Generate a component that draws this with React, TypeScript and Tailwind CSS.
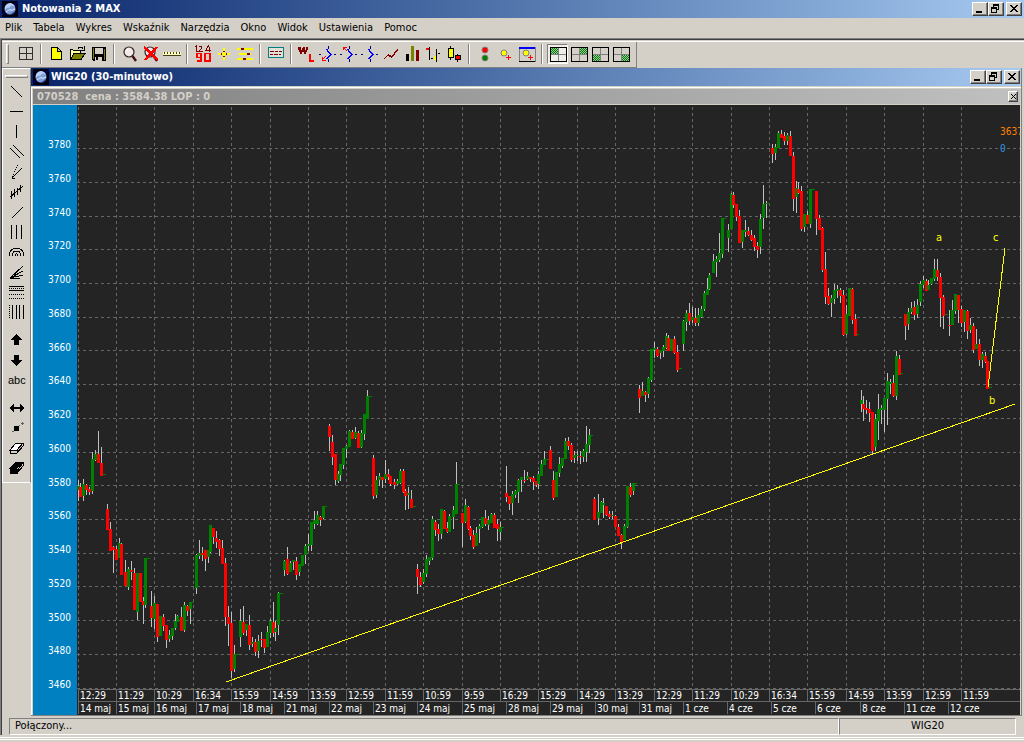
import React from 'react';

type Origin = { x: number; y: number };
type Block = { origin: Origin; candles: string };

/* Each candle: centre, high, body top, body bottom, low, colour.
   Values are in thirds of a pixel from the origin of their block. */
const blocks: Block[] = [
  {
    origin: { x: -1, y: 274 },
    candles: `7 300 318 330 363 g;13 309 321 351 351 r;22 297 312 348 363 g;31 312 315 330 345 r;40 321 327 336 345 r;49 216 237 333 342 g;58 210 222 240 243 g;67 153 222 249 249 r;76 201 249 288 288 r;85 282 282 285 285 g;
94 372 387 450 450 r;103 426 447 513 513 r;112 498 501 510 579 r;121 498 507 540 540 r;130 474 489 534 534 g;136 489 492 585 585 r;148 540 576 618 618 r;157 561 567 621 630 g;166 543 570 576 600 r;175 564 579 690 690 r;184 579 579 696 720 g;193 579 579 666 666 r;202 651 663 675 732 r;208 534 534 675 684 g;217 534 534 537 537 g;
226 633 678 714 741 r;235 648 669 717 747 g;244 672 672 771 786 r;253 708 708 768 768 g;262 702 711 738 753 r;271 735 735 780 804 r;280 750 765 777 786 g;289 744 744 768 780 g;298 702 723 744 750 g;304 705 708 726 726 g;316 681 711 753 753 r;325 666 675 750 756 g;334 675 678 693 708 r;343 666 666 687 732 g;349 666 666 669 669 g;
361 522 525 624 642 g;370 480 519 528 537 g;379 501 519 525 543 r;388 510 510 537 573 r;397 510 510 531 549 g;403 435 435 516 519 g;412 444 444 471 492 r;421 453 474 486 504 r;430 477 480 507 528 r;439 480 504 552 552 r;448 534 549 711 738 r;457 678 711 732 798 r;466 696 729 873 894 r;475 795 822 867 876 g;484 822 822 825 825 g;
493 687 723 771 801 g;502 678 726 759 765 r;511 732 732 750 768 g;520 705 735 795 810 r;529 771 786 792 801 g;538 777 786 816 828 r;547 765 783 813 834 g;556 756 777 780 801 r;565 777 777 804 819 r;574 738 756 801 801 g;583 717 723 759 774 g;592 666 726 759 771 r;598 723 744 756 783 g`,
  },
  {
    origin: { x: 193, y: 274 },
    candles: `25 636 639 735 765 g;34 639 639 642 642 g;43 540 543 570 588 g;52 501 537 582 585 r;61 543 549 576 576 g;70 540 540 546 570 g;79 531 543 585 600 r;88 552 552 576 588 g;97 525 525 558 558 g;106 492 498 525 552 g;115 462 492 498 513 g;124 426 426 495 513 g;133 393 420 432 447 g;142 393 405 432 435 g;151 408 411 420 438 r;160 378 378 414 417 g;166 378 378 381 381 g;
178 132 138 171 213 r;187 165 186 231 255 r;196 222 222 300 315 r;205 273 282 303 309 g;211 252 252 285 303 g;220 204 204 255 267 g;229 195 198 207 234 g;238 150 153 201 201 g;247 150 156 177 177 r;256 141 156 174 177 g;265 153 159 204 204 r;274 150 159 201 204 g;283 102 102 162 180 g;292 30 48 117 117 g;301 48 48 51 51 g;
310 225 234 348 357 r;319 288 300 345 354 g;328 279 288 300 318 g;337 291 291 300 324 r;346 240 282 297 309 g;355 267 282 291 300 r;361 288 288 312 318 r;373 297 306 315 327 r;382 297 303 312 315 g;391 267 273 309 312 g;400 267 273 336 339 r;406 327 333 348 390 r;415 321 339 345 387 g;424 330 357 384 384 r;433 378 378 381 381 g;
442 552 567 591 642 r;451 576 591 615 621 r;460 567 579 606 612 g;469 525 537 582 591 g;478 531 531 543 555 g;487 408 417 534 540 g;496 420 426 450 468 r;505 432 447 462 483 r;514 387 387 462 477 g;523 390 393 447 447 r`,
  },
  {
    origin: { x: 363, y: 294 },
    candles: `22 366 384 396 399 r;28 342 348 396 396 g;40 318 330 351 387 g;49 186 252 342 342 g;55 252 252 255 255 g;67 339 339 369 441 r;76 297 315 366 369 g;85 318 321 387 390 r;91 378 384 408 420 r;100 390 405 441 447 r;109 381 399 438 438 g;118 372 378 387 429 g;127 351 351 381 384 g;136 330 354 372 378 r;145 348 360 375 390 g;154 339 342 369 369 g;163 339 345 384 384 r;172 357 372 387 423 r;181 366 381 396 420 g;187 381 381 384 384 g;
199 198 279 291 306 r;208 288 288 312 330 r;217 273 282 309 345 g;226 270 273 285 294 g;235 237 240 276 309 g;244 231 231 240 276 g;253 210 240 243 249 r;262 216 228 237 240 g;271 231 231 237 246 r;280 228 234 246 270 r;289 243 243 255 261 r;295 213 222 252 267 g;304 180 192 228 228 g;313 153 177 195 195 g;322 177 177 180 180 g;331 138 150 207 207 r;340 213 240 294 300 r;349 216 216 291 291 g;358 171 192 219 231 g;367 174 174 198 204 g;376 114 123 177 177 g;385 111 123 138 150 r;394 129 135 180 186 r;403 153 165 174 189 g;412 153 165 168 183 g;421 153 168 171 192 r;430 147 153 171 186 g;439 78 132 156 186 g;448 87 105 135 159 g;454 105 105 108 108 g;
463 291 297 360 360 r;475 282 336 354 375 g;484 303 306 339 339 g;490 294 309 315 354 g;499 318 318 345 348 r;508 333 342 351 357 r;517 333 345 348 357 g;526 345 348 381 381 r;535 372 381 408 408 r;544 402 405 426 447 r;553 372 378 420 420 g;562 258 258 381 384 g;571 249 261 285 291 r;580 249 249 273 285 g;586 249 249 252 252 g`,
  },
  {
    origin: { x: 553, y: 14 },
    candles: `28 795 807 834 879 r;37 786 813 828 828 g;46 813 816 825 846 r;55 771 774 822 834 g;64 687 687 780 786 g;73 666 684 690 714 g;82 681 687 708 711 r;91 690 690 699 717 g;100 675 681 693 711 g;109 639 648 684 687 g;115 645 654 693 693 r;124 657 657 693 693 g;133 648 657 699 702 r;142 675 696 750 756 r;151 744 744 747 747 g;
160 600 603 672 693 g;169 570 579 606 633 g;178 549 579 603 615 r;187 561 591 600 609 g;196 564 594 609 618 r;205 564 585 609 618 g;214 558 567 591 594 g;223 513 519 567 573 g;232 474 507 525 525 g;238 459 465 507 510 g;250 402 423 459 459 g;259 408 417 426 471 g;268 339 399 420 426 g;277 294 294 402 414 g;283 294 294 297 297 g;
295 312 330 354 396 g;304 219 222 327 327 g;310 216 225 255 264 r;319 252 252 291 303 r;328 270 288 369 369 r;337 330 330 366 384 g;346 300 330 336 351 g;355 321 333 345 348 r;364 330 345 360 363 r;373 345 354 381 393 r;382 366 378 390 414 r;391 282 297 381 402 g;400 195 252 294 327 g;409 243 249 252 294 g;415 249 249 252 252 g;
427 72 84 102 129 r;436 72 81 99 120 g;445 33 39 84 84 g;454 30 42 54 54 r;463 36 48 63 75 r;472 39 45 63 75 g;481 33 48 108 108 r;490 96 108 237 273 r;499 183 204 231 279 g;505 186 207 219 222 r;514 198 213 327 333 r;523 282 282 321 336 g;532 273 285 312 312 r;541 207 207 312 324 g;550 207 207 210 210 g;559 213 213 297 345 r;568 285 294 330 330 r;577 321 324 450 456 r;586 396 447 531 552 r;595 504 528 552 555 r`,
  },
  {
    origin: { x: 733, y: 74 },
    candles: `64 345 354 369 411 g;73 312 330 357 372 g;82 315 327 333 354 g;91 324 330 348 369 r;100 330 345 465 468 r;109 375 402 462 465 g;118 324 324 408 408 g;127 324 327 420 432 r;136 402 417 468 468 r;142 462 462 465 465 g;
154 630 660 672 696 g;160 648 672 687 723 r;169 660 684 690 702 r;178 666 687 699 726 r;187 696 696 813 822 r;196 702 717 801 813 g;205 642 687 723 780 g;214 675 684 690 732 g;223 654 654 690 756 g;232 579 603 657 735 g;241 597 606 612 642 g;250 585 609 648 651 r;259 513 528 648 660 g;268 525 537 585 585 r;274 579 579 582 582 g;
286 402 402 438 480 r;295 384 396 432 450 g;304 366 384 396 402 g;313 363 381 405 420 r;322 357 375 402 414 g;331 303 312 366 378 g;340 288 300 315 324 g;349 297 303 333 333 r;355 300 315 330 330 g;364 294 294 312 315 g;373 237 267 297 303 g;382 237 270 291 303 r;391 279 291 354 441 r;400 345 351 408 447 r;409 402 402 405 405 g;418 390 435 438 468 r;427 360 390 435 435 g;436 342 342 393 402 g;445 345 345 390 429 r;454 378 387 429 441 r;463 390 390 426 456 g;472 390 393 453 477 r;481 414 435 450 459 g;490 429 438 510 519 r;499 447 492 507 507 g;508 477 492 540 558 r;517 516 522 540 564 g;526 516 528 546 549 r;532 543 543 627 627 r;541 621 621 624 624 g`,
  },
];

const hours: [number, string][] = [
  [1, '12:29'], [39, '11:29'], [77, '10:29'], [116, '16:34'], [154, '15:59'], [193, '14:59'],
  [231, '13:59'], [269, '12:59'], [308, '11:59'], [346, '10:59'], [385, '9:59'], [423, '16:29'],
  [461, '15:29'], [500, '14:29'], [538, '13:29'], [577, '12:29'], [615, '11:29'], [654, '10:29'],
  [692, '16:34'], [730, '15:59'], [769, '14:59'], [807, '13:59'], [846, '12:59'], [884, '11:59'],
];

const days: [number, string][] = [
  [1, '14 maj'], [39, '15 maj'], [77, '16 maj'], [119, '17 maj'], [163, '18 maj'], [207, '21 maj'],
  [252, '22 maj'], [296, '23 maj'], [340, '24 maj'], [385, '25 maj'], [429, '28 maj'], [473, '29 maj'],
  [518, '30 maj'], [562, '31 maj'], [606, '1 cze'], [650, '4 cze'], [694, '5 cze'], [738, '6 cze'],
  [783, '8 cze'], [827, '11 cze'], [871, '12 cze'],
];

const levels = [42, 76, 110, 143, 177, 211, 244, 278, 312, 346, 379, 413, 447, 480, 514, 548, 582];
const prices = levels.map((_, i) => 3780 - i * 20);

const candles = blocks.flatMap(({ origin, candles: list }) =>
  list.split(';').map((entry) => {
    const [x, h, t, b, l, c] = entry.trim().split(' ');
    const py = (v: string) => origin.y + Math.round(Number(v) / 3);
    return {
      x: origin.x + Math.floor(Number(x) / 3),
      high: py(h),
      top: py(t),
      bottom: py(b),
      low: py(l),
      fill: c === 'g' ? '#008000' : '#ff0000',
    };
  }),
);

function Chart() {
  return (
    <svg className="block h-[610px] w-full" shapeRendering="crispEdges" role="img" aria-label="WIG20">
      <g transform="translate(0 1)">
        <g stroke="#666666" strokeDasharray="3 3">
          {levels.map((y) => (
            <line key={y} x1="0" x2="100%" y1={y + 0.5} y2={y + 0.5} />
          ))}
          {hours.map(([x]) => (
            <line key={x} x1={x + 0.5} x2={x + 0.5} y1="1" y2="583" />
          ))}
        </g>
        <g stroke="#666666">
          <line x1="1" x2="100%" y1="583.5" y2="583.5" />
          <line x1="1" x2="100%" y1="595.5" y2="595.5" />
          {hours.map(([x]) => (
            <line key={x} x1={x + 0.5} x2={x + 0.5} y1="583" y2="595" />
          ))}
          {days.map(([x]) => (
            <line key={x} x1={x + 0.5} x2={x + 0.5} y1="596" y2="608" />
          ))}
        </g>
        {candles.map((c) => (
          <g key={c.x}>
            <rect x={c.x} y={c.high} width="1" height={c.low - c.high} fill="#c0c0c0" />
            <rect x={c.x - 1} y={c.top} width="3" height={c.bottom - c.top} fill={c.fill} />
          </g>
        ))}
        <g stroke="#ffff00">
          <line x1="149" y1="576" x2="938" y2="298" />
          <line x1="911" y1="281" x2="928" y2="142" />
        </g>
        <g fontSize="10" fill="#ffffff">
          {hours.map(([x, label]) => (
            <text key={x} x={x + 2} y="593">{label}</text>
          ))}
          {days.map(([x, label]) => (
            <text key={x} x={x + 2} y="606">{label}</text>
          ))}
          <text x="923" y="29" fill="#ff8000">3637</text>
          <text x="923" y="46" fill="#2a98e8">0</text>
        </g>
        <g fontSize="11" fill="#ffff00">
          <text x="859" y="135">a</text>
          <text x="916" y="135">c</text>
          <text x="912" y="298">b</text>
        </g>
      </g>
    </svg>
  );
}

function Logo() {
  return (
    <svg viewBox="0 0 16 16" className="h-4 w-4 shrink-0" aria-hidden="true">
      <rect width="16" height="16" fill="#000010" />
      <path d="M0 14 16 1" stroke="#0000c0" />
      <circle cx="8" cy="8" r="5.5" fill="#7f9fd8" />
      <path d="M3 9c2-4 4-1 5-3s3-2 5 0c-1-3-3-4-5-4C5 2 2 5 3 9z" fill="#b8d0f8" />
      <path d="M4 11c2-1 3-3 5-2s2-1 4-1" stroke="#e8f0ff" fill="none" />
      <path d="M8 13.4a5.5 5.5 0 0 0 5.4-4C12 11 10 11.5 8 13.4z" fill="#3048a0" />
    </svg>
  );
}

const raised =
  'flex items-center justify-center bg-[#d4d0c8] border border-white border-r-[#404040] border-b-[#404040] shadow-[inset_-1px_-1px_0_#808080]';

function WindowButtons() {
  return (
    <div className="flex">
      <button aria-label="Minimalizuj" className={`${raised} h-[14px] w-4`}>
        <svg className="h-3 w-[14px]" viewBox="0 0 14 12"><path d="M3 8h6v2H3z" /></svg>
      </button>
      <button aria-label="Przywróć" className={`${raised} h-[14px] w-4`}>
        <svg className="h-3 w-[14px]" viewBox="0 0 14 12" shapeRendering="crispEdges">
          <path d="M4 1h6v6H8V6h1V3H5v1H4zM2 4h6v6H2zM3 6v3h4V6z" fillRule="evenodd" />
        </svg>
      </button>
      <button aria-label="Zamknij" className={`${raised} ml-0.5 h-[14px] w-4`}>
        <svg className="h-3 w-[14px]" viewBox="0 0 14 12" shapeRendering="crispEdges">
          <path d="M3 2h2v1h1v1h2V3h1V2h2v1h-1v1H9v1H8v1h1v1h1v1h1v1H9V8H8V7H6v1H5v1H3V8h1V7h1V6h1V5H5V4H4V3H3z" />
        </svg>
      </button>
    </div>
  );
}

type Icon = { name: string; art: React.ReactNode; pressed?: boolean };

const arrow = (tip: React.ReactNode) => (
  <>
    <path d="M10.500 2v3M10.500 15v3M1 10.500h2M16 10.500h2" stroke="#000080" />
    <path d="M8 5h2v2h1v1h1v1h1v1h1v1h-1v1h-1v1h-1v1h-1v1H8v-1h1v-1h1v-1h1v-1h1v-1h-1V9h-1V8H9V6H8z" fill="#0000ff" />
    {tip}
  </>
);

const quad = (x: number, y: number) => (
  <>
    <path d="M10.500 3v14M3 10.500h15" stroke="#808080" />
    <rect x={x} y={y} width="7" height="6" fill="url(#green-checks)" />
    <rect x="2.500" y="3.500" width="16" height="14" fill="none" stroke="#000" />
  </>
);

const lens = (
  <g shapeRendering="geometricPrecision">
    <circle cx="9" cy="8" r="5" fill="#f4e8e8" stroke="#302020" strokeWidth="1.2" />
    <path d="M6 8a3 3 0 0 1 3-3" stroke="#fff" fill="none" />
    <path d="m12.500 12 3.500 5" stroke="#401010" strokeWidth="2.400" />
  </g>
);

const groups: Icon[][] = [
  [{
    name: 'Okna',
    art: <><rect x="3.500" y="3.500" width="13" height="12" fill="none" stroke="#303030" /><path d="M10.500 3.500v12M3.500 9.500h13" stroke="#303030" /></>,
  }],
  [
    { name: 'Nowy', art: <path d="M4.500 3.500h6l4 4v8h-10zM10.500 3.500v4h4" fill="#ffff00" stroke="#000" /> },
    {
      name: 'Otwórz',
      art: <><path d="M2.500 15.500v-10h2l1 1h7v3" fill="#ffffa0" stroke="#000" /><path d="M2.500 15.500 6 9.500h11l-4 6z" fill="#808000" stroke="#000" /><path d="M10 4.500q3-3 5 0M16 2v4h-3" fill="none" stroke="#000" /></>,
    },
    {
      name: 'Zapisz',
      art: <><path d="M3 3h14v14H4l-1-1z" /><path d="M6 4h8v6H6z" fill="#d4d0c8" /><path d="M6 13h7v4H6z" fill="#d4d0c8" /><path d="M7 13h2v3H7z" /><path d="M4 4h1v11H4zM15 5h1v11h-1z" fill="#808000" /></>,
    },
  ],
  [
    { name: 'Lupa', art: lens },
    { name: 'Wyłącz lupę', art: <>{lens}<path d="m3 3 14 13M16 3 4 16" stroke="#ff0000" strokeWidth="2.600" /></> },
    {
      name: 'Linijka',
      art: <><rect x="1" y="8" width="18" height="3" fill="#ffffb0" /><path d="M2 8.500h17M2 9.500h17" stroke="#404040" strokeDasharray="1 2" /><path d="M1 11.500h18" stroke="#404020" /></>,
    },
  ],
  [
    {
      name: 'Wartości',
      art: <><path d="m2 3 1-1v6M6 3q3-2 3 0 0 2-3 4h4M16 1l-3 5h5M16 3v5" fill="none" stroke="#800000" /><path d="M4 9.500h4v4H4zM8 13v4H4M12 9.500h5V17h-5z" fill="none" stroke="#ff0000" strokeWidth="1.400" /></>,
    },
    {
      name: 'Krzyż',
      art: <><path d="M9 4h2v12H9zM4 9h12v2H4z" fill="#ffff00" /><path d="M9 7h2v1H9zM9 12h2v1H9zM7 9h1v2H7zM12 9h1v2h-1z" fill="#800000" /></>,
    },
    {
      name: 'Parametry',
      art: <><path d="M2 4h16v2H2zM4 9h12v2H4zM2 14h16v2H2z" fill="#ffff00" /><path d="M6 4h3v2H6zM12 9h3v2h-3zM8 14h3v2H8z" fill="#800000" /></>,
    },
  ],
  [{
    name: 'Tabela notowań',
    art: <><rect x="2.500" y="3.500" width="15" height="10" fill="#e4e0d8" stroke="#008080" /><path d="M4 7.500h4M9 7.500h3M13 7.500h3M4 10.500h3M8 10.500h4M13 10.500h2" stroke="#800000" /></>,
  }],
  [
    {
      name: 'WL',
      art: <><path d="M2 3v2l2 4 2-4 2 4 2-4V3M3 3l1 5M7 3l1 5" fill="none" stroke="#800000" strokeWidth="1.500" /><path d="M13 10v7h4" fill="none" stroke="#ff0000" strokeWidth="2" /></>,
    },
    { name: 'Poprzedni', art: arrow(<path d="m8 12-4 4M4.500 13v3.500H8" stroke="#ff0000" fill="none" />) },
    { name: 'Następny', art: arrow(<path d="m8 7-4-4M4.500 6V3.500H8" stroke="#ff0000" fill="none" />) },
    { name: 'Bieżący', art: arrow(null) },
    { name: 'Liniowy', art: <path d="m3 15 4-4 4 2 6-8" fill="none" stroke="#800000" strokeWidth="1.400" /> },
    {
      name: 'Słupkowy',
      art: <><path d="M4 10h3v7H4z" /><path d="M9 2h3v15H9z" fill="#808000" /><path d="M14 6h3v11h-3z" fill="#800000" /></>,
    },
    {
      name: 'OHLC',
      art: <><path d="M6.500 3v13M8 14.500h2M13.500 5v13M15 9.500h2" stroke="#000" /><path d="M3 4h3v2H3z" fill="#ff0000" /><path d="M11 12h2v4h-2z" fill="#ffff00" /></>,
    },
    {
      name: 'Świecowy',
      art: <><path d="M6.500 2v14M13.500 10v8" stroke="#000" /><rect x="4.500" y="4.500" width="5" height="9" fill="#ffff00" stroke="#000" /><rect x="11.500" y="11.500" width="5" height="4" fill="#ff0000" stroke="#000" /></>,
    },
  ],
  [
    { name: 'Sygnały', art: <g stroke="#808080" shapeRendering="geometricPrecision"><circle cx="10" cy="6" r="3" fill="#ff0000" /><circle cx="10" cy="14" r="3" fill="#008000" /></g> },
    { name: 'Dodaj', art: <><circle cx="8" cy="9" r="3" fill="#ffff00" stroke="#808080" shapeRendering="geometricPrecision" /><path d="M12.500 11v5M10 13.500h5" stroke="#ff0000" /></> },
    {
      name: 'Dodaj okno',
      art: <><rect x="2.500" y="3.500" width="16" height="14" fill="none" stroke="#808080" /><path d="M2 4h16" stroke="#0000ff" strokeWidth="2" /><path d="M2 17.500h16" stroke="#000" /><circle cx="9" cy="9" r="3" fill="#ffff00" stroke="#808080" shapeRendering="geometricPrecision" /><path d="M13.500 11v5M11 13.500h5" stroke="#ff0000" /></>,
    },
  ],
  [
    { name: 'Układ 1', art: quad(3, 4), pressed: true },
    { name: 'Układ 2', art: quad(11, 4) },
    { name: 'Układ 3', art: quad(3, 11) },
    { name: 'Układ 4', art: quad(11, 11) },
  ],
];

const drawingTools: Icon[][] = [
  [
    { name: 'Linia', art: <path d="m4.500 4.500 11 11" /> },
    { name: 'Pozioma', art: <path d="M3 9.500h13" /> },
    { name: 'Pionowa', art: <path d="M9.500 3v13" /> },
    { name: 'Kanał', art: <path d="m3 6 10 10M6 3l11 11" /> },
    { name: 'Wachlarz', art: <><path d="M5 16 15 6M5 16h3" /><path d="M5 15 11 3" strokeDasharray="1 1" /></> },
    { name: 'Regresja', art: <path d="m3 15 13-11M4.500 9v8M7.500 7v8M10.500 6v7M13.500 3v7" /> },
    { name: 'Promień', art: <path d="M5 16 16 5" /> },
    { name: 'Linie pionowe', art: <path d="M4.500 3v14M9.500 3v14M14.500 3v14" /> },
    {
      name: 'Łuki',
      art: <path d="M2.500 14v-2c0-3 3-6 7-6s7 3 7 6v2M5.500 14v-1c0-3 2-4 4-4s4 1 4 4v1M8 14c0-3 3-3 3 0" fill="none" />,
    },
    { name: 'Fan', art: <path d="M3 16 16 4M3 16 16 9M3 16l13-3M3 16h10" /> },
    { name: 'Fibonacci', art: <><path d="M2 4.500h15M2 8.500h15" /><path d="M2 6.500h15M2 12.500h15M2 16.500h15" strokeDasharray="1 1" /></> },
    { name: 'Strefy czasowe', art: <><path d="M5.500 3v14M9.500 3v14M12.500 3v14M16.500 3v14" /><path d="M2.500 3v14" strokeDasharray="1 1" /></> },
  ],
  [
    { name: 'W górę', art: <path d="M9.500 4 16 10h-4v5H7v-5H3z" fill="#000" stroke="none" /> },
    { name: 'W dół', art: <path d="M9.500 16 16 10h-4V5H7v5H3z" fill="#000" stroke="none" /> },
    { name: 'Tekst', art: <text x="1" y="14" fontSize="11" fill="#000" stroke="none" fontFamily="Liberation Sans, sans-serif">abc</text> },
  ],
  [
    { name: 'Rozciągnij', art: <path d="m2 10 5-4v3h6V6l5 4-5 4v-3H7v3z" fill="#000" stroke="none" /> },
    { name: 'Punkt', art: <><path d="M7 8h5v5H7z" fill="#000" stroke="none" /><path d="M14 5.500h3M15.500 4v3M5 13.500h2M12 7.500h1" stroke="#606060" /></> },
    { name: 'Gumka', art: <><path d="m3 12 6-7h7l-6 7z" fill="#fff" /><path d="M3 12v3h7l6-7V5M10 12v3" fill="none" /></> },
    { name: 'Usuń wszystko', art: <><path d="m3 10 6-6h7l-6 6z" /><path d="M3 11h7v4H3z" /><path d="m11 11 5-6v3l-5 6z" fill="#d4d0c8" /></> },
  ],
];

function ToolButton({ icon }: { icon: Icon }) {
  return (
    <button
      aria-label={icon.name}
      className={
        icon.pressed
          ? 'flex h-5 w-[21px] items-center justify-center border border-t-[#808080] border-l-[#808080] border-r-white border-b-white bg-[#f0eeea]'
          : 'flex h-5 w-[21px] items-center justify-center'
      }
    >
      <svg viewBox="0 0 20 20" className="h-5 w-5 shrink-0" shapeRendering="crispEdges">{icon.art}</svg>
    </button>
  );
}

const menu = ['Plik', 'Tabela', 'Wykres', 'Wskaźnik', 'Narzędzia', 'Okno', 'Widok', 'Ustawienia', 'Pomoc'];

export default function App() {
  return (
    <div className="flex min-h-screen flex-col overflow-hidden bg-[#d4d0c8] font-['DejaVu_Sans_Condensed','DejaVu_Sans',sans-serif] text-[11px] leading-[14px] text-black">
      <svg className="absolute h-0 w-0" aria-hidden="true">
        <defs>
          <pattern id="green-checks" width="2" height="2" patternUnits="userSpaceOnUse">
            <rect width="2" height="2" fill="#a0c8a0" />
            <path d="M0 0h1v1H0zM1 1h1v1H1z" fill="#008000" />
          </pattern>
        </defs>
      </svg>

      <header className="flex h-[18px] items-center justify-between bg-linear-to-r from-[#0a246a] to-[#a6caf0] pr-0.5 pl-0.5">
        <h1 className="flex items-center gap-1 font-bold text-white"><Logo />Notowania 2 MAX</h1>
        <WindowButtons />
      </header>

      <nav className="flex h-5 items-center gap-[11px] pl-[5px]">
        {menu.map((item) => (
          <button key={item}>{item}</button>
        ))}
      </nav>

      <div className="border-t border-l border-[#808080]">
        <div className="border-t border-l border-[#404040]">
          <div className="mt-px flex h-[27px] border-t border-white">
            <div className="flex items-center border-r border-b border-[#808080] pr-[5px] pb-0.5 pl-1">
              <span className="mr-1.5 h-5 w-[3px] border border-white border-r-[#808080] border-b-[#808080]" />
              {groups.map((group, i) => (
                <div key={i} className="flex items-center">
                  {i > 0 && <span className="mx-1 h-5 w-0.5 border-l border-[#808080] border-r border-r-white" />}
                  {group.map((icon) => (
                    <ToolButton key={icon.name} icon={icon} />
                  ))}
                </div>
              ))}
            </div>
          </div>

          <div className="flex">
            <aside className="flex w-[29px] shrink-0 flex-col self-start border border-white border-r-[#808080] pb-1">
              <span className="mx-0.5 mt-[6px] mb-1 h-[3px] border border-white border-r-[#808080] border-b-[#808080]" />
              {drawingTools.map((group, i) => (
                <div key={i} className="mb-2 flex flex-col items-center last:mb-0">
                  {group.map((icon) => (
                    <button key={icon.name} aria-label={icon.name} className="flex h-5 w-6 items-center justify-center">
                      <svg viewBox="0 0 20 20" className="h-5 w-5" stroke="#000" shapeRendering="crispEdges">{icon.art}</svg>
                    </button>
                  ))}
                </div>
              ))}
            </aside>

            <main className="mr-0.5 min-w-0 flex-1 border-r border-b border-[#808080]">
              <div className="flex h-[18px] items-center justify-between bg-linear-to-r from-[#0a246a] to-[#a6caf0] pr-px pl-0.5">
                <h2 className="flex items-center gap-0.5 font-bold text-white"><Logo />WIG20 (30-minutowo)</h2>
                <WindowButtons />
              </div>
              <div className="mt-px border-t border-l border-white pr-px">
                <div className="ml-px flex h-[17px] items-center justify-between border-y border-[#d4d0c8] bg-linear-to-r from-[#808080] to-[#c0c0c0] pr-0.5 pl-1">
                  <span className="font-bold whitespace-pre text-[#d4d0c8]">070528  cena : 3584.38 LOP : 0</span>
                  <button aria-label="Zamknij wykres" className={`${raised} h-[11px] w-[10px]`}>
                    <svg viewBox="0 0 7 7" className="h-[7px] w-[7px]" shapeRendering="crispEdges">
                      <path d="m1 1 5 5M6 1 1 6" stroke="#000" />
                    </svg>
                  </button>
                </div>
                <div className="ml-px flex bg-[#242424]">
                  <div className="flex w-11 shrink-0 flex-col justify-between bg-[#0080c0] pt-[33px] pr-1.5 pb-6 text-right text-[10px] leading-[13px] text-white">
                    {prices.map((price) => (
                      <span key={price}>{price}</span>
                    ))}
                  </div>
                  <div className="min-w-0 flex-1 overflow-hidden">
                    <Chart />
                  </div>
                </div>
              </div>
            </main>
          </div>

          <footer className="mt-0.5 mr-2 ml-[7px] flex h-[17px]">
            <div className="flex-1 border border-white border-t-[#808080] border-l-[#808080] pl-[5px]">Połączony...</div>
            <div className="w-[177px] border border-white border-t-[#808080] border-l-[#808080] text-center">WIG20</div>
          </footer>
        </div>
      </div>
      <div className="mt-0.5 h-[3px] border-y border-white" />
    </div>
  );
}
